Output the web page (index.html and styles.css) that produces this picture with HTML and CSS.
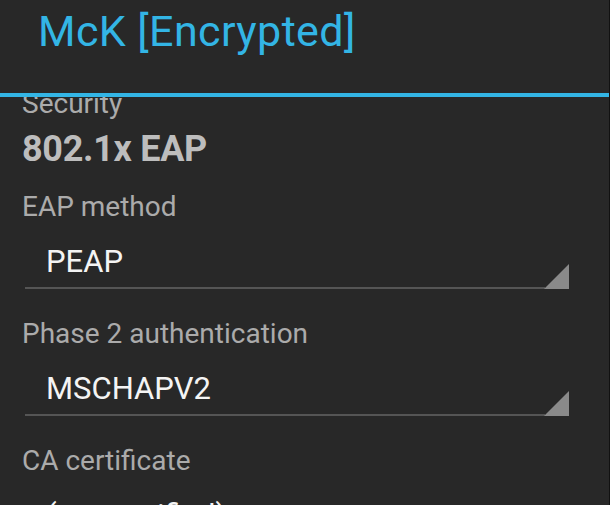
FILE: index.html
```html
<!DOCTYPE html>
<html>

<head>
  <title>Wi-Fi network</title>
  <link rel="stylesheet" href="styles.css">
</head>

<body>
  <div class="dialog">
    <h1 class="dialog-title">McK [Encrypted]</h1>
    <div class="dialog-divider"></div>
    <div class="dialog-body">
      <div class="dialog-scroll">
        <p class="field-label">Security</p>
        <p class="field-static">802.1x EAP</p>

        <div class="field">
          <p class="field-label">EAP method</p>
          <div class="spinner">
            <span class="spinner-text">PEAP</span>
            <svg class="spinner-arrow" width="25" height="25" viewBox="0 0 25 25"><polygon points="25,0 25,25 0,25" /></svg>
          </div>
        </div>

        <div class="field">
          <p class="field-label">Phase 2 authentication</p>
          <div class="spinner">
            <span class="spinner-text">MSCHAPV2</span>
            <svg class="spinner-arrow" width="25" height="25" viewBox="0 0 25 25"><polygon points="25,0 25,25 0,25" /></svg>
          </div>
        </div>

        <div class="field">
          <p class="field-label">CA certificate</p>
          <div class="spinner">
            <span class="spinner-text">(unspecified)</span>
            <svg class="spinner-arrow" width="25" height="25" viewBox="0 0 25 25"><polygon points="25,0 25,25 0,25" /></svg>
          </div>
        </div>
      </div>
    </div>
  </div>
</body>
</html>
```

FILE: styles.css
```css
html,
body {
  margin: 0;
  height: 100%;
  background: #111111;
  overflow: hidden;
}

body {
  font-family: Roboto, "Noto Sans", sans-serif;
}

.dialog {
  width: 609px;
  height: 505px;
  background: #282828;
  display: flex;
  flex-direction: column;
}

.dialog-title {
  box-sizing: border-box;
  height: 93px;
  margin: 0;
  padding: 6px 0 0 38px;
  font-size: 43px;
  font-weight: 400;
  letter-spacing: 0.4px;
  line-height: 50px;
  color: #33b5e5;
}

.dialog-divider {
  height: 4px;
  background: #33b5e5;
}

.dialog-body {
  flex: 1;
  overflow: hidden;
  padding: 0 40px 0 22px;
}

.dialog-scroll {
  margin-top: -9px;
}

.field-label {
  margin: 0;
  font-size: 28px;
  line-height: 32px;
  color: #ababab;
}

.field-static {
  margin: 9px 0 22px;
  font-size: 36px;
  font-weight: 700;
  letter-spacing: -0.3px;
  line-height: 40px;
  color: #bdbdbd;
}

.field {
  margin-bottom: 29px;
}

.spinner {
  display: flex;
  align-items: flex-end;
  margin: 21px 0 0 3px;
}

.spinner-text {
  flex: 1;
  padding: 0 0 7px 21px;
  border-bottom: 2px solid #555555;
  font-size: 31px;
  line-height: 36px;
  color: #f4f4f4;
}

.spinner-arrow {
  display: block;
  margin-left: -1px;
  fill: #8a8a8a;
}
```
